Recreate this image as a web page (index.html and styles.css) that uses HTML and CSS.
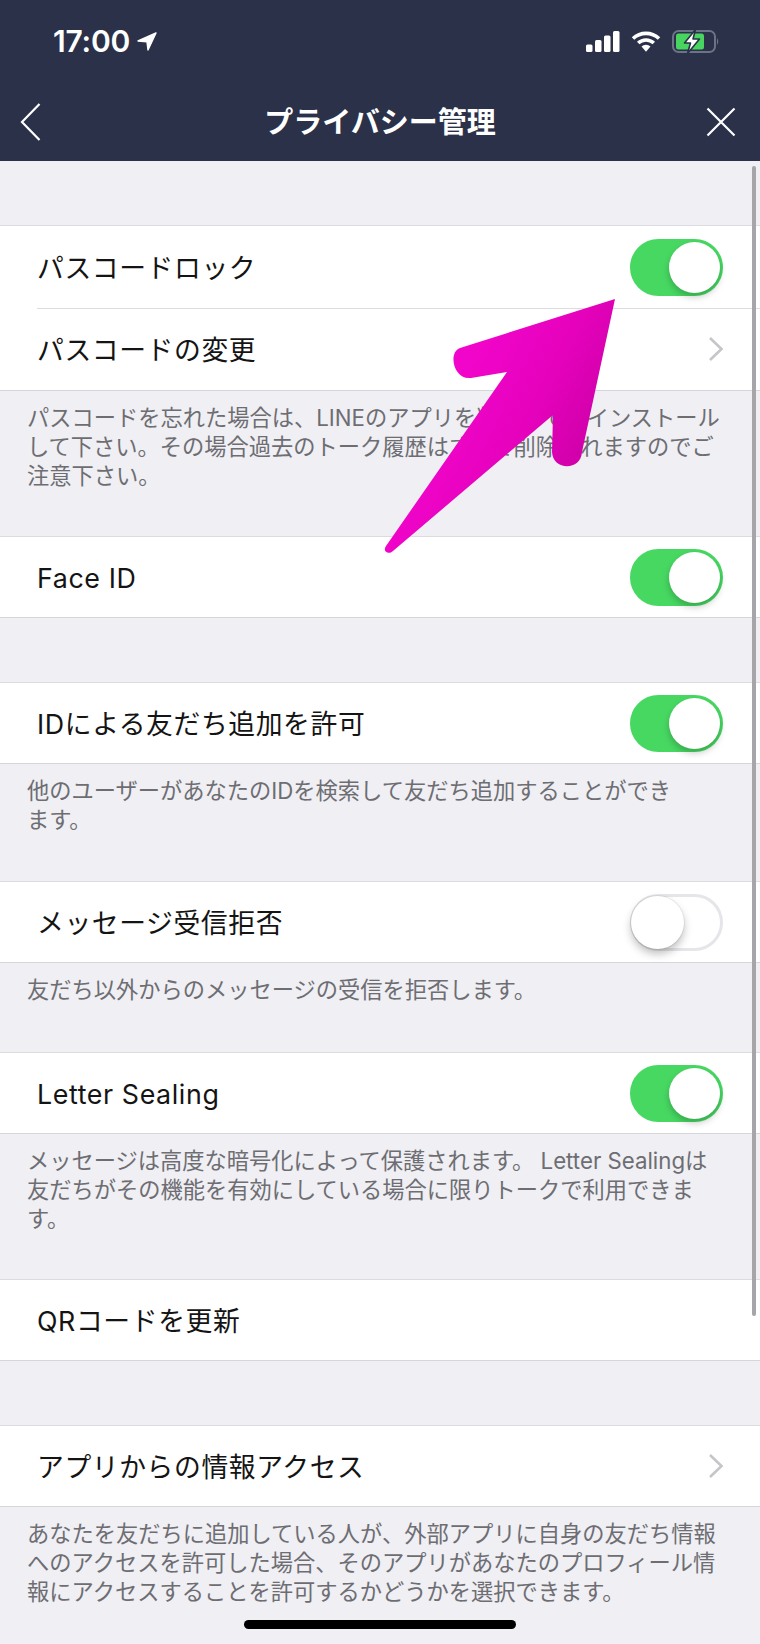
FILE: index.html
```html
<!DOCTYPE html>
<html lang="ja">
<head>
<meta charset="utf-8">
<title>プライバシー管理</title>
<link rel="stylesheet" href="styles.css">
</head>
<body>
<div class="screen">
  <header class="header">
    <div class="status">
      <div class="clock">
        <span class="time">17:00</span>
        <svg class="loc" width="20" height="19" viewBox="0 0 20 19"><path d="M19 1 L1 9 L10 9.8 L11 18 Z" fill="#fff" stroke="#fff" stroke-width="1.4" stroke-linejoin="round"/></svg>
      </div>
      <div class="indicators">
        <svg width="34" height="21" viewBox="0 0 34 21"><g fill="#fff"><rect x="0" y="13.5" width="6.5" height="7.5" rx="1.5"/><rect x="9" y="9" width="6.5" height="12" rx="1.5"/><rect x="18" y="4.5" width="6.5" height="16.5" rx="1.5"/><rect x="27" y="0" width="6.5" height="21" rx="1.5"/></g></svg>
        <svg width="30" height="21" viewBox="0 0 30 21"><g fill="none" stroke="#fff" stroke-width="3.6"><path d="M2 7.5 A19 19 0 0 1 28 7.5"/><path d="M7.2 12 A11.5 11.5 0 0 1 22.8 12"/></g><path d="M10.5 15.6 A6.5 6.5 0 0 1 19.5 15.6 L15 20.8 Z" fill="#fff"/></svg>
        <svg width="48" height="25" viewBox="0 0 48 25"><rect x="1" y="2" width="42" height="21" rx="5.5" fill="none" stroke="#6d7387" stroke-width="2"/><rect x="4" y="4.5" width="28" height="16" rx="2.5" fill="#47d45f"/><path d="M45 9 Q47.5 12.5 45 16 Z" fill="#6d7387"/><path d="M23.5 0.5 L12.5 14 H18.5 L15.5 24.5 L27.5 10 H21 Z" fill="#fff" stroke="#2a3149" stroke-width="1.6" stroke-linejoin="round"/></svg>
      </div>
    </div>
    <div class="navbar">
      <svg class="nav-back" width="24" height="40" viewBox="0 0 24 40"><path d="M20.5 2 L3 20 L20.5 38" fill="none" stroke="#fff" stroke-width="2.2"/></svg>
      <h1 class="title">プライバシー管理</h1>
      <svg class="nav-close" width="32" height="32" viewBox="0 0 32 32"><path d="M2.5 2.5 L29.5 29.5 M29.5 2.5 L2.5 29.5" fill="none" stroke="#fff" stroke-width="2.2"/></svg>
    </div>
  </header>

  <main class="list">
    <section class="group">
      <div class="row first"><span class="label">パスコードロック</span><span class="toggle on"></span></div>
      <div class="row inset"><span class="label">パスコードの変更</span>
        <svg class="chev" width="16" height="26" viewBox="0 0 16 26"><path d="M2 2 L13.5 13 L2 24" fill="none" stroke="#c5c5ca" stroke-width="2.6"/></svg></div>
    </section>
    <p class="note">パスコードを忘れた場合は、LINEのアプリを削除して再インストール<br>して下さい。その場合過去のトーク履歴はすべて削除されますのでご<br>注意下さい。</p>

    <section class="group spaced">
      <div class="row"><span class="label">Face ID</span><span class="toggle on"></span></div>
    </section>

    <section class="group">
      <div class="row"><span class="label">IDによる友だち追加を許可</span><span class="toggle on"></span></div>
    </section>
    <p class="note two">他のユーザーがあなたのIDを検索して友だち追加することができ<br>ます。</p>

    <section class="group">
      <div class="row"><span class="label">メッセージ受信拒否</span><span class="toggle"></span></div>
    </section>
    <p class="note one">友だち以外からのメッセージの受信を拒否します。</p>

    <section class="group">
      <div class="row"><span class="label">Letter Sealing</span><span class="toggle on"></span></div>
    </section>
    <p class="note">メッセージは高度な暗号化によって保護されます。 Letter Sealingは<br>友だちがその機能を有効にしている場合に限りトークで利用できま<br>す。</p>

    <section class="group spaced">
      <div class="row"><span class="label">QRコードを更新</span></div>
    </section>

    <section class="group">
      <div class="row"><span class="label">アプリからの情報アクセス</span>
        <svg class="chev" width="16" height="26" viewBox="0 0 16 26"><path d="M2 2 L13.5 13 L2 24" fill="none" stroke="#c5c5ca" stroke-width="2.6"/></svg></div>
    </section>
    <p class="note">あなたを友だちに追加している人が、外部アプリに自身の友だち情報<br>へのアクセスを許可した場合、そのアプリがあなたのプロフィール情<br>報にアクセスすることを許可するかどうかを選択できます。</p>
  </main>

  <div class="scrollbar"></div>
  <div class="home-bar"></div>

  <svg class="arrow" width="760" height="1644" viewBox="0 0 760 1644">
    <defs>
      <linearGradient id="mag" gradientUnits="userSpaceOnUse" x1="440" y1="400" x2="580" y2="470">
        <stop offset="0" stop-color="#f205cb"/>
        <stop offset="0.55" stop-color="#e602bd"/>
        <stop offset="1" stop-color="#cf00a8"/>
      </linearGradient>
    </defs>
    <path d="M615 299 L460 348 C448 352 453 380 471 378 L507 372 L386 546 C382 552 389 555 393 551 L553 415 L552 452 C553 471 581 471 582 452 Z" fill="url(#mag)"/>
  </svg>
</div>
</body>
</html>
```
FILE: styles.css
```css
* { box-sizing: border-box; }
html, body { margin: 0; padding: 0; }
body {
  width: 760px;
  height: 1644px;
  overflow: hidden;
  background: #efeff4;
  font-family: "Inter", "Noto Sans CJK JP", sans-serif;
}
.screen { position: relative; width: 760px; height: 1644px; overflow: hidden; }

.header { height: 161px; background: #2a3149; color: #fff; display: flex; flex-direction: column; }
.status { height: 82px; padding: 0 40px 0 53px; display: flex; justify-content: space-between; align-items: center; }
.clock { display: flex; align-items: center; gap: 7px; }
.time { font-size: 30px; font-weight: 600; line-height: 1; letter-spacing: -0.2px; }
.loc { display: block; }
.indicators { display: flex; align-items: center; gap: 11px; }
.indicators svg { display: block; }
.navbar { height: 79px; padding: 0 23px; display: grid; grid-template-columns: 1fr auto 1fr; align-items: center; }
.navbar svg { display: block; }
.nav-back { margin-left: -4px; }
.nav-close { justify-self: end; }
.title { margin: 0; font-size: 29px; font-weight: 700; line-height: 1; padding-top: 1px; }

.list { padding-top: 64px; }
.group { background: #fff; border-top: 1px solid #dcdce0; border-bottom: 1px solid #d6d6da; }
.spaced { margin-bottom: 64px; }
.row { height: 80px; padding: 0 37px; display: flex; align-items: center; justify-content: space-between; position: relative; }
.row.first { height: 82px; }
.row.inset { height: 82px; }
.row.inset::before { content: ""; position: absolute; top: 0; left: 37px; right: 0; height: 1px; background: #dcdce0; }
.label { font-size: 26.8px; letter-spacing: .6px; color: #141414; line-height: 1; margin-top: 2px; }
.chev { display: block; margin-right: -1px; }
.note { margin: 0; padding: 12px 27px 46px; font-size: 22.25px; line-height: 29px; color: #6d6d72; white-space: nowrap; }
.note.two { padding-bottom: 47px; }
.note.one { padding-bottom: 48px; }

.toggle { position: relative; width: 93px; height: 57px; border-radius: 29px; background: #fff; border: 3px solid #e6e6ea; flex: none; }
.toggle::after { content: ""; position: absolute; left: -2px; top: -1px; width: 53px; height: 53px; border-radius: 50%; background: #fff; box-shadow: 0 0 0 1px rgba(0,0,0,.06), 0 5px 8px rgba(0,0,0,.25); }
.toggle.on { background: #47d862; border-color: #47d862; }
.toggle.on::after { left: 36px; top: 0; width: 51px; height: 51px; box-shadow: 0 4px 7px rgba(0,0,0,.22); }

.scrollbar { position: absolute; left: 752px; top: 166px; width: 4px; height: 1150px; border-radius: 2px; background: #a6a6aa; }
.home-bar { position: absolute; left: 244px; top: 1620px; width: 272px; height: 9px; border-radius: 5px; background: #000; }
.arrow { position: absolute; left: 0; top: 0; pointer-events: none; }
```
